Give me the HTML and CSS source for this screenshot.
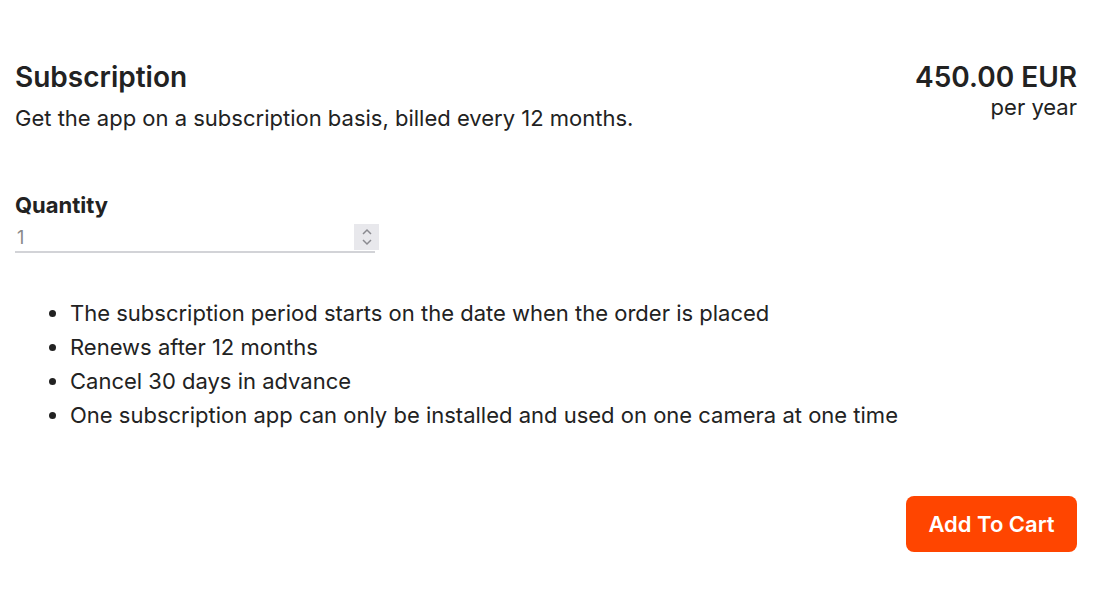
FILE: index.html
```html
<!DOCTYPE html>
<html lang="en">
<head>
  <meta charset="UTF-8">
  <meta name="viewport" content="width=device-width, initial-scale=1.0">
  <title>Subscription</title>
<link rel="stylesheet" href="styles.css">
</head>
<body>

<div class="main">

  <div class="plan_head">
    <div class="plan_info">
      <h2>Subscription</h2>
      <p>Get the app on a subscription basis, billed every 12 months.</p>
    </div>
    <div class="plan_price">
      <div class="amount">450.00 EUR</div>
      <div class="period">per year</div>
    </div>
  </div>

  <div class="qty_box">
    <label for="qty"><b>Quantity</b></label>
    <div class="qty_field">
      <input type="text" id="qty" value="1">
      <div class="spinner">
        <svg width="12" height="20" viewBox="0 0 12 20">
          <path d="M2 7 L6 3 L10 7" fill="none" stroke="#8a8a90" stroke-width="1.5"/>
          <path d="M2 13 L6 17 L10 13" fill="none" stroke="#8a8a90" stroke-width="1.5"/>
        </svg>
      </div>
    </div>
  </div>

  <ul class="terms">
    <li>The subscription period starts on the date when the order is placed</li>
    <li>Renews after 12 months</li>
    <li>Cancel 30 days in advance</li>
    <li>One subscription app can only be installed and used on one camera at one time</li>
  </ul>

  <div class="actions">
    <button id="action_btn">Add To Cart</button>
  </div>

</div>

</body>
</html>
```

FILE: styles.css
```css
*{
  padding: 0;
  margin: 0;
  box-sizing: border-box;
  font-family: 'Inter', sans-serif;
}
body{
  color: #222;
  background: #fff;
}
.main{
  width: 100%;
  padding: 60px 22px 0 15px;
  display: flex;
  flex-direction: column;
}

.plan_head{
  display: flex;
  justify-content: space-between;
  align-items: flex-start;
}
.plan_info h2{
  font-size: 28px;
  font-weight: 600;
  line-height: 34px;
}
.plan_info p{
  font-size: 22px;
  line-height: 28px;
  margin-top: 10px;
}
.plan_price{
  text-align: right;
}
.plan_price .amount{
  font-size: 28px;
  font-weight: 600;
  line-height: 34px;
}
.plan_price .period{
  font-size: 22px;
  line-height: 26px;
}

.qty_box{
  margin-top: 59px;
  width: 364px;
}
.qty_box label{
  display: block;
  font-size: 22px;
  line-height: 28px;
}
.qty_box label b{
  font-weight: 700;
}
.qty_field{
  display: flex;
  align-items: center;
  width: 360px;
  position: relative;
  border-bottom: 2px solid #d2d3d7;
  height: 29px;
  margin-top: 5px;
}
.qty_field input{
  flex: 1;
  border: none;
  outline: none;
  font-size: 18px;
  color: #888;
  padding-left: 2px;
  background: transparent;
}
.spinner{
  position: absolute;
  right: -4px;
  top: 0;
  width: 25px;
  height: 26px;
  background: #e8e8ec;
  display: flex;
  align-items: center;
  justify-content: center;
}

.terms{
  margin-top: 43px;
  padding-left: 55px;
  font-size: 22px;
  line-height: 34px;
}

.actions{
  display: flex;
  justify-content: flex-end;
  margin-top: 64px;
}
#action_btn{
  width: 171px;
  height: 56px;
  border: none;
  border-radius: 8px;
  background-color: #ff4500;
  color: #fff;
  font-size: 22px;
  font-weight: 600;
  cursor: pointer;
}
```
